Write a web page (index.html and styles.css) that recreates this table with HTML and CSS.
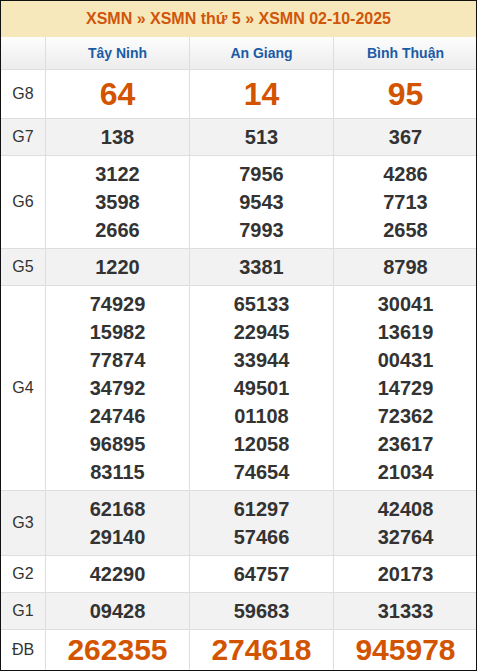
FILE: index.html
```html
<!DOCTYPE html>
<html lang="vi">
<head>
<meta charset="utf-8">
<title>XSMN 02-10-2025</title>
<link rel="stylesheet" href="styles.css">
</head>
<body>
<div class="box">
  <div class="title">XSMN » XSMN thứ 5 » XSMN 02-10-2025</div>
  <div class="grid">
    <div class="hd"></div>
    <div class="hd prov">Tây Ninh</div>
    <div class="hd prov">An Giang</div>
    <div class="hd prov">Bình Thuận</div>

    <div class="lb">G8</div>
    <div class="c big g8">64</div>
    <div class="c big g8">14</div>
    <div class="c big g8">95</div>

    <div class="lb alt">G7</div>
    <div class="c alt">138</div>
    <div class="c alt">513</div>
    <div class="c alt">367</div>

    <div class="lb">G6</div>
    <div class="c">3122<br>3598<br>2666</div>
    <div class="c">7956<br>9543<br>7993</div>
    <div class="c">4286<br>7713<br>2658</div>

    <div class="lb alt">G5</div>
    <div class="c alt">1220</div>
    <div class="c alt">3381</div>
    <div class="c alt">8798</div>

    <div class="lb">G4</div>
    <div class="c">74929<br>15982<br>77874<br>34792<br>24746<br>96895<br>83115</div>
    <div class="c">65133<br>22945<br>33944<br>49501<br>01108<br>12058<br>74654</div>
    <div class="c">30041<br>13619<br>00431<br>14729<br>72362<br>23617<br>21034</div>

    <div class="lb alt">G3</div>
    <div class="c alt">62168<br>29140</div>
    <div class="c alt">61297<br>57466</div>
    <div class="c alt">42408<br>32764</div>

    <div class="lb">G2</div>
    <div class="c">42290</div>
    <div class="c">64757</div>
    <div class="c">20173</div>

    <div class="lb alt">G1</div>
    <div class="c alt">09428</div>
    <div class="c alt">59683</div>
    <div class="c alt">31333</div>

    <div class="lb">ĐB</div>
    <div class="c big db">262355</div>
    <div class="c big db">274618</div>
    <div class="c big db">945978</div>
  </div>
</div>
</body>
</html>
```

FILE: styles.css
```css
* { box-sizing: border-box; }
html, body { margin: 0; padding: 0; background: #fff; }
body { font-family: "Liberation Sans", Arial, sans-serif; color: #333; }

.box {
  width: 477px;
  height: 671px;
  border: 1px solid #111;
  overflow: hidden;
}

.title {
  height: 36px;
  line-height: 36px;
  background: #f7e8bc;
  color: #cf560a;
  font-weight: bold;
  font-size: 16px;
  text-align: center;
}

.grid {
  display: grid;
  grid-template-columns: 44px 143px 143px 143px;
  column-gap: 1px;
  row-gap: 1px;
  background: #dedede;
}

.hd {
  height: 32px;
  line-height: 32px;
  background: linear-gradient(#fdfdfd, #ececec);
  text-align: center;
}
.prov {
  color: #1b5ba6;
  font-weight: bold;
  font-size: 14px;
}

.lb, .c {
  background: #fff;
  padding: 4px 0;
}
.lb {
  display: flex;
  align-items: center;
  justify-content: center;
  font-size: 16px;
  color: #333;
}
.c {
  text-align: center;
  font-weight: bold;
  font-size: 20px;
  line-height: 28px;
  color: #333;
}
.alt { background: #f2f2f2; }

.big { color: #d35400; }
.g8 { font-size: 32px; line-height: 40px; }
.db { font-size: 30px; line-height: 32px; }
```
